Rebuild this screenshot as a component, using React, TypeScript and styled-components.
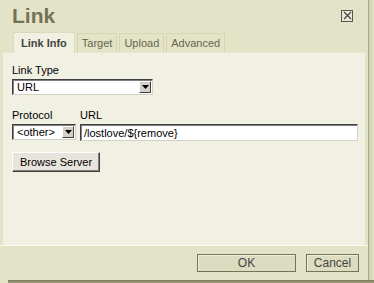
import React, { useState } from 'react';
import styled, { createGlobalStyle } from 'styled-components';

const GlobalStyle = createGlobalStyle`
  html, body {
    margin: 0;
    padding: 0;
    background: #e3e3c7;
  }
  body {
    font-family: "Liberation Sans", Arial, sans-serif;
    font-size: 11px;
    color: #000;
  }
`;

const tabs = ['Link Info', 'Target', 'Upload', 'Advanced'];

function ArrowBox() {
  return (
    <ArrowButton>
      <svg width="7" height="4" viewBox="0 0 7 4">
        <path d="M0 0h7L3.5 4z" fill="#000" />
      </svg>
    </ArrowButton>
  );
}

export default function App() {
  const [active, setActive] = useState(0);
  const [url, setUrl] = useState('/lostlove/${remove}');

  return (
    <>
      <GlobalStyle />
      <Frame>
        <Dialog>
          <TitleBar>
            <Title>Link</Title>
            <CloseBox aria-label="Close">
              <svg width="9" height="9" viewBox="0 0 9 9">
                <path d="M1 1l7 7M8 1L1 8" stroke="#444" strokeWidth="1.2" />
              </svg>
            </CloseBox>
          </TitleBar>
          <TabStrip>
            {tabs.map((t, i) => (
              <Tab key={t} $active={i === active} onClick={() => setActive(i)}>
                {t}
              </Tab>
            ))}
          </TabStrip>
          <Content>
            <Field>
              <Label>Link Type</Label>
              <Select $width={141}>
                <SelectText>URL</SelectText>
                <ArrowBox />
              </Select>
            </Field>
            <Row>
              <Field>
                <Label>Protocol</Label>
                <Select $width={64}>
                  <SelectText>&lt;other&gt;</SelectText>
                  <ArrowBox />
                </Select>
              </Field>
              <Field $grow>
                <Label>URL</Label>
                <TextInput value={url} onChange={(e) => setUrl(e.target.value)} />
              </Field>
            </Row>
            <BrowseButton type="button">Browse Server</BrowseButton>
          </Content>
          <Footer>
            <FooterButton type="button" $width={99}>OK</FooterButton>
            <FooterButton type="button" $width={53}>Cancel</FooterButton>
          </Footer>
        </Dialog>
        <RightShadow />
      </Frame>
      <BottomShadow />
    </>
  );
}

const Frame = styled.div`
  display: flex;
  width: 374px;
  height: 280px;
`;

const Dialog = styled.div`
  display: flex;
  flex-direction: column;
  width: 369px;
  height: 280px;
  background: #e3e3c7;
  border-right: 1px solid #a9a98a;
  box-sizing: border-box;
`;

const RightShadow = styled.div`
  width: 5px;
  background: linear-gradient(to right, #cfcfb2, #e0e0c5);
`;

const BottomShadow = styled.div`
  width: 366px;
  height: 3px;
  margin-left: 8px;
  background: linear-gradient(to bottom, #7b7b5c, #9d9d7e);
`;

const TitleBar = styled.div`
  display: flex;
  align-items: center;
  justify-content: space-between;
  height: 32px;
  padding: 0 15px 0 12px;
`;

const Title = styled.div`
  font-family: "Liberation Sans", Arial, sans-serif;
  font-size: 21px;
  font-weight: bold;
  color: #737357;
  margin-top: 0;
`;

const CloseBox = styled.button`
  display: flex;
  align-items: center;
  justify-content: center;
  width: 12px;
  height: 12px;
  padding: 0;
  border: 1px solid #555;
  background: #e9e9d3;
  margin-top: -1px;
  cursor: pointer;
`;

const TabStrip = styled.div`
  display: flex;
  align-items: flex-end;
  gap: 2px;
  height: 20px;
  padding-left: 13px;
`;

const Tab = styled.div<{ $active?: boolean }>`
  display: flex;
  align-items: center;
  height: ${({ $active }) => ($active ? '21px' : '19px')};
  padding: 0 ${({ $active }) => ($active ? '7px' : '4px')};
  box-sizing: border-box;
  border: 1px solid ${({ $active }) => ($active ? '#dcdcbd' : '#d6d6b6')};
  border-bottom: none;
  background: ${({ $active }) => ($active ? '#f1f1e3' : '#e3e3c7')};
  color: ${({ $active }) => ($active ? '#444' : '#66664c')};
  font-weight: ${({ $active }) => ($active ? 'bold' : 'normal')};
  font-size: 11px;
  margin-bottom: ${({ $active }) => ($active ? '-1px' : '0')};
  position: relative;
  cursor: pointer;
`;

const Content = styled.div`
  flex: 1;
  display: flex;
  flex-direction: column;
  align-items: flex-start;
  margin: 0 3px;
  padding: 11px 7px 0 9px;
  background: #f1f1e3;
  border-top: 1px solid #e8e8d2;
`;

const Field = styled.div<{ $grow?: boolean }>`
  display: flex;
  flex-direction: column;
  gap: 3px;
  ${({ $grow }) => ($grow ? 'flex: 1;' : '')}
`;

const Row = styled.div`
  display: flex;
  gap: 4px;
  width: 100%;
  margin-top: 14px;
`;

const Label = styled.label`
  font-size: 11px;
  color: #000;
  line-height: 12px;
`;

const Select = styled.div<{ $width: number }>`
  display: flex;
  align-items: center;
  justify-content: space-between;
  width: ${({ $width }) => $width}px;
  height: 16px;
  box-sizing: border-box;
  background: #fff;
  border-top: 1px solid #404040;
  border-left: 1px solid #404040;
  border-right: 1px solid #d4d0c8;
  border-bottom: 1px solid #d4d0c8;
  box-shadow: inset 1px 1px 0 #808080;
  padding: 1px 1px 1px 4px;
`;

const SelectText = styled.span`
  font-size: 11px;
  line-height: 12px;
`;

const ArrowButton = styled.span`
  display: flex;
  align-items: center;
  justify-content: center;
  width: 12px;
  height: 12px;
  box-sizing: border-box;
  background: #d4d0c8;
  border-top: 1px solid #fff;
  border-left: 1px solid #fff;
  border-right: 1px solid #404040;
  border-bottom: 1px solid #404040;
`;

const TextInput = styled.input`
  height: 17px;
  box-sizing: border-box;
  width: 100%;
  padding: 0 3px;
  font-family: "Liberation Sans", Arial, sans-serif;
  font-size: 11px;
  background: #fff;
  border-top: 1px solid #404040;
  border-left: 1px solid #404040;
  border-right: 1px solid #d4d0c8;
  border-bottom: 1px solid #d4d0c8;
  box-shadow: inset 1px 1px 0 #808080;
  outline: none;
`;

const BrowseButton = styled.button`
  height: 20px;
  margin-top: 11px;
  padding: 0 7px;
  font-family: "Liberation Sans", Arial, sans-serif;
  font-size: 11px;
  color: #000;
  background: #e8e4dc;
  border-top: 1px solid #fff;
  border-left: 1px solid #fff;
  border-right: 1px solid #404040;
  border-bottom: 1px solid #404040;
  box-shadow: inset -1px -1px 0 #808080;
  cursor: pointer;
`;

const Footer = styled.div`
  display: flex;
  justify-content: flex-end;
  align-items: center;
  gap: 10px;
  height: 34px;
  padding: 0 9px 0 0;
  border-top: 1px solid #fafaef;
  background: #e3e3c7;
`;

const FooterButton = styled.button<{ $width: number }>`
  width: ${({ $width }) => $width}px;
  height: 18px;
  padding: 0;
  font-family: "Liberation Sans", Arial, sans-serif;
  font-size: 12px;
  color: #444;
  background: #dcdcc0;
  border: 1px solid #737357;
  box-shadow: inset 1px 1px 0 #eeeedd;
  cursor: pointer;
`;
